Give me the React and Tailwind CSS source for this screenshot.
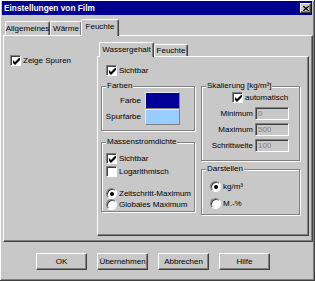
import React from 'react';

// win95-style bevels
const raised = "border border-t-white border-l-white border-r-[#404040] border-b-[#404040] shadow-[inset_-1px_-1px_0_#808080]";
const sunken = "border border-t-[#808080] border-l-[#808080] border-r-white border-b-white shadow-[inset_1px_1px_0_#404040]";

function Check({ checked }) {
  return (
    <span className={`w-[11px] h-[11px] bg-white ${sunken} flex items-center justify-center shrink-0`}>
      {checked && (
        <svg width="7" height="7" viewBox="0 0 7 7" className="ml-[1px] mt-[1px]">
          <path d="M0 2 L2 4 L6 0 L7 0 L7 2 L2 7 L0 5 Z" fill="#000" />
        </svg>
      )}
    </span>
  );
}

function Radio({ checked }) {
  return (
    <span className="w-[11px] h-[11px] rounded-full bg-white border border-t-[#808080] border-l-[#808080] border-r-white border-b-white shadow-[inset_1px_1px_0_#404040] flex items-center justify-center shrink-0">
      {checked && <span className="w-[4px] h-[4px] rounded-full bg-black ml-[1px] mt-[1px]" />}
    </span>
  );
}

function Group({ legend, className, children }) {
  return (
    <fieldset className={`border border-[#808080] shadow-[1px_1px_0_#fff,inset_1px_1px_0_#fff] ${className}`}>
      <legend className="ml-[4px] px-[1px] leading-[10px] bg-[#c8c8c8]">{legend}</legend>
      {children}
    </fieldset>
  );
}

function Tab({ label, active, className }) {
  return (
    <div
      className={`${className} border-t border-l border-t-white border-l-white border-r border-r-[#404040] shadow-[inset_-1px_0_0_#808080] rounded-t-[2px] flex items-start justify-center pt-[2px] bg-[#c8c8c8] ${active ? 'relative z-10 -mb-[1px]' : ''}`}
    >
      {label}
    </div>
  );
}

function Field({ label, value }) {
  return (
    <div className="flex items-center justify-end gap-[2px] h-[13px]">
      <span>{label}</span>
      <span className={`w-[34px] h-[13px] ${sunken} pl-[2px] text-[#808080] leading-[11px]`}>{value}</span>
    </div>
  );
}

function Button({ children }) {
  return (
    <button className={`w-[51px] h-[17px] ${raised} flex items-center justify-center leading-[10px]`}>
      {children}
    </button>
  );
}

export default function App() {
  return (
    <div className="w-[315px] h-[281px] bg-[#c8c8c8] border-r border-b border-[#404040] shadow-[inset_1px_1px_0_#fff,inset_-1px_-1px_0_#808080] pl-[2px] pr-[1px] pt-[1px] text-[8px] leading-[10px] text-black font-['Liberation_Sans',Arial,sans-serif] flex flex-col">
      {/* title bar */}
      <div className="h-[14px] mr-[1px] bg-[#000090] flex items-center justify-between pl-[2px] pr-[1px]">
        <span className="text-white font-bold text-[8.3px]">Einstellungen von Film</span>
        <span className={`w-[11px] h-[10px] bg-[#c8c8c8] ${raised} flex items-center justify-center`}>
          <svg width="6" height="5" viewBox="0 0 6 5">
            <path d="M0 0 L6 5 M6 0 L0 5" stroke="#000" strokeWidth="1.3" />
          </svg>
        </span>
      </div>

      {/* outer tabs */}
      <div className="mt-[4px] h-[16px] ml-[3px] flex items-end">
        <Tab label="Allgemeines" className="w-[45px] h-[14px]" />
        <Tab label="Wärme" className="w-[32px] h-[14px]" />
        <Tab label="Feuchte" active className="w-[38px] h-[17px] -ml-[1px]" />
      </div>

      {/* outer panel */}
      <div className={`ml-[1px] w-[310px] h-[207px] ${raised} flex`}>
        <div className="w-[93px] pl-[6px] pt-[19px]">
          <label className="flex items-center gap-[2px]">
            <Check checked />
            <span>Zeige Spuren</span>
          </label>
        </div>

        <div className="pt-[6px] flex flex-col">
          {/* inner tabs */}
          <div className="h-[14px] ml-[2px] flex items-end">
            <Tab label="Wassergehalt" active className="w-[55px] h-[15px]" />
            <Tab label="Feuchte" className="w-[34px] h-[12px] !pt-[1px]" />
          </div>

          <div className={`w-[212px] h-[180px] ${raised} flex flex-col`}>
            <label className="flex items-center gap-[2px] ml-[8px] mt-[8px]">
              <Check checked />
              <span>Sichtbar</span>
            </label>

            <div className="flex gap-[6px] ml-[3px] mt-[5px]">
              <div className="w-[94px] flex flex-col gap-[6px]">
                <Group legend="Farben" className="h-[50px]">
                  <div className="flex flex-col mt-[1px]">
                    <div className="flex items-center h-[17px]">
                      <span className="w-[39px] text-right">Farbe</span>
                      <span className="ml-[4px] w-[35px] h-[17px] bg-[#000099] border border-t-[#e8e8e8] border-l-[#e8e8e8] border-r-[#808080] border-b-[#808080]" />
                    </div>
                    <div className="flex items-center h-[16px]">
                      <span className="w-[39px] text-right">Spurfarbe</span>
                      <span className="ml-[4px] w-[35px] h-[16px] bg-[#99ccff] border border-t-[#e8e8e8] border-l-[#e8e8e8] border-r-[#808080] border-b-[#808080]" />
                    </div>
                  </div>
                </Group>

                <Group legend="Massenstromdichte" className="h-[75px]">
                  <div className="flex flex-col ml-[4px] mt-[6px]">
                    <label className="flex items-center gap-[2px]">
                      <Check checked />
                      <span>Sichtbar</span>
                    </label>
                    <label className="flex items-center gap-[2px] mt-[2px]">
                      <Check />
                      <span>Logarithmisch</span>
                    </label>
                    <label className="flex items-center gap-[2px] mt-[11px]">
                      <Radio checked />
                      <span>Zeitschritt-Maximum</span>
                    </label>
                    <label className="flex items-center gap-[2px]">
                      <Radio />
                      <span>Globales Maximum</span>
                    </label>
                  </div>
                </Group>
              </div>

              <div className="w-[99px] flex flex-col gap-[3px]">
                <Group legend="Skalierung [kg/m³]" className="h-[80px]">
                  <label className="flex items-center gap-[2px] ml-[30px] mt-[1px]">
                    <Check checked />
                    <span>automatisch</span>
                  </label>
                  <div className="flex flex-col gap-[3px] pr-[10px] mt-[4px]">
                    <Field label="Minimum" value="0" />
                    <Field label="Maximum" value="500" />
                    <Field label="Schrittweite" value="100" />
                  </div>
                </Group>

                <Group legend="Darstellen" className="h-[51px]">
                  <div className="flex flex-col gap-[6px] ml-[8px] mt-[7px]">
                    <label className="flex items-center gap-[2px]">
                      <Radio checked />
                      <span>kg/m³</span>
                    </label>
                    <label className="flex items-center gap-[2px]">
                      <Radio />
                      <span>M.-%</span>
                    </label>
                  </div>
                </Group>
              </div>
            </div>
          </div>
        </div>
      </div>

      {/* dialog buttons */}
      <div className="flex gap-[10px] ml-[34px] mt-[11px]">
        <Button>OK</Button>
        <Button>Übernehmen</Button>
        <Button>Abbrechen</Button>
        <Button>Hilfe</Button>
      </div>
    </div>
  );
}
